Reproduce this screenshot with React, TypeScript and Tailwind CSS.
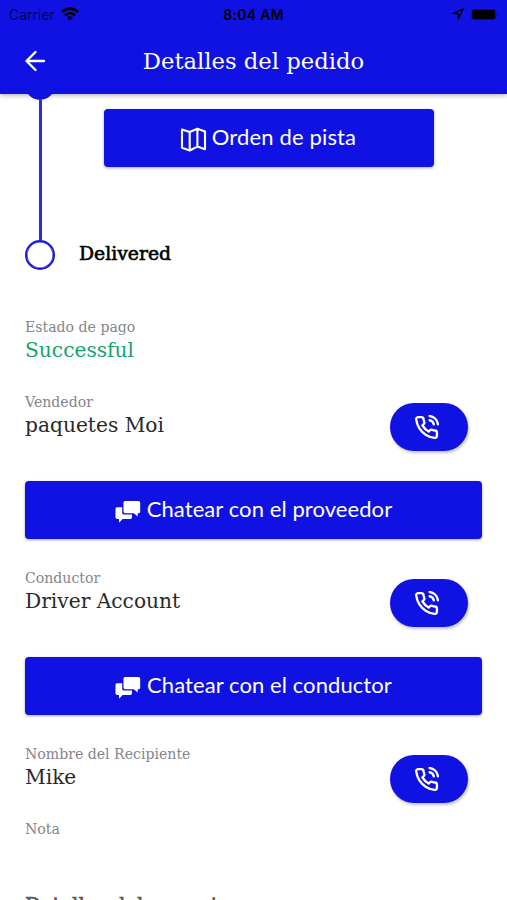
import React from 'react';
import { FiPhoneCall } from 'react-icons/fi';

const serif = "font-['DejaVu_Serif',serif]";

function StatusBar() {
  return (
    <div className="grid h-7 grid-cols-3 items-center px-[9px] font-['Inter',sans-serif] text-black">
      <div className="flex items-center gap-1.5">
        <span className="text-[14px] text-black/70">Carrier</span>
        <svg width="18" height="14" viewBox="0 0 18 14" fill="none" stroke="black" strokeWidth="2.6">
          <path d="M1 5C5.5.5 12.500.5 17 5M4 8.300C6.800 5.500 11.200 5.500 14 8.300" />
          <path d="M9 13.500 6 10.500Q9 8 12 10.500Z" fill="black" stroke="none" />
        </svg>
      </div>
      <span className="text-center text-[14px] font-semibold tracking-[0.3px]">8:04 AM</span>
      <div className="flex items-center justify-end gap-[7px]">
        <svg width="12" height="12" viewBox="0 0 12 12" fill="none" stroke="black" strokeWidth="1.300" strokeLinejoin="round">
          <path d="M11 1 1 5.500h5.300V11Z" />
        </svg>
        <div className="flex items-center gap-px">
          <span className="h-[11px] w-[25px] rounded-[3px] bg-black/30 p-px">
            <span className="block h-full rounded-[2px] bg-black" />
          </span>
          <span className="h-1 w-px rounded-r bg-black/50" />
        </div>
      </div>
    </div>
  );
}

function BackIcon() {
  return (
    <svg className="ml-[25px]" width="21" height="22" viewBox="0 0 21 22" fill="none" stroke="currentColor" strokeWidth="2.3" strokeLinecap="round" strokeLinejoin="round">
      <path d="M19 11H1.500M10.500 2 1.500 11l9 9" />
    </svg>
  );
}

function MapIcon() {
  return (
    <svg width="27" height="26" viewBox="0 0 27 26" fill="none" stroke="currentColor" strokeWidth="2.1" strokeLinejoin="round">
      <path d="M2 2.500 9.700 5 17.400 1.800 25 4.500V22.300L17.400 19.600 9.700 23.500 2 20.800ZM9.700 5V23.500M17.400 1.800V19.600" />
    </svg>
  );
}

function ChatIcon() {
  return (
    <svg width="26" height="24" viewBox="0 0 26 24" fill="currentColor">
      <path d="M10.200 1H23.500Q25.200 1 25.200 2.700V11.500Q25.200 13.200 23.500 13.200H22.700V16.600L18.800 13.200H10.200Q8.500 13.200 8.500 11.500V2.700Q8.500 1 10.200 1Z" />
      <path d="M2 7.300H7.200V12.700Q7.200 14.600 9.100 14.600H17V17.200Q17 18.900 15.300 18.900H7.600L4 22.800V18.900H2.200Q.5 18.900.5 17.200V8.900Q.5 7.300 2 7.300Z" />
    </svg>
  );
}

function CallButton() {
  return (
    <button className="mr-[14.5px] mt-[11px] flex h-12 w-[78px] items-center justify-center rounded-full bg-[#0f12e3] pr-1 text-white shadow-[1px_2px_3px_rgba(0,0,0,0.25)]">
      <FiPhoneCall size={25} strokeWidth={2.3} />
    </button>
  );
}

function ChatButton({ label }: { label: string }) {
  return (
    <button className="flex h-[58px] w-full items-center justify-center gap-1.5 rounded bg-[#0f12e3] font-['Lato',sans-serif] text-[22px] tracking-[0.08px] text-white shadow-[0_1px_3px_rgba(0,0,0,0.35)]">
      <span className="mt-1">
        <ChatIcon />
      </span>
      <span className="-mt-1">{label}</span>
    </button>
  );
}

function Field({ label, value, green }: { label: string; value: string; green?: boolean }) {
  return (
    <div className={serif}>
      <div className="h-[21px] text-[14.1px] leading-[21px] text-[#85858a]">{label}</div>
      <div
        className={
          green
            ? 'text-[20.2px] leading-[24px] text-[#12a46b]'
            : 'text-[20.2px] leading-[24px] text-[#292929]'
        }
      >
        {value}
      </div>
    </div>
  );
}

export default function App() {
  return (
    <div className="flex h-[900px] w-[507px] flex-col overflow-hidden bg-white">
      <header className="h-[94px] shrink-0 bg-[#0f12e3] shadow-[0_1px_5px_rgba(0,0,0,0.35)]">
        <StatusBar />
        <div className="grid h-[66px] grid-cols-[72px_1fr_72px] items-center text-white">
          <BackIcon />
          <h1 className={serif + ' text-center text-[22.7px]'}>Detalles del pedido</h1>
        </div>
      </header>
      <section className="flex h-[176px] shrink-0 pl-[25px]">
        <div className="flex w-[30px] flex-col items-center">
          <div className="flex h-1.5 items-end overflow-hidden">
            <div className="size-[30px] shrink-0 rounded-full bg-[#0f12e3]" />
          </div>
          <div className="w-[3px] grow bg-[#2a2cd8]" />
          <div className="size-[30px] rounded-full border-[2.5px] border-[#1719dc] shadow-[inset_0_0_0_0.5px_#1719dc]" />
        </div>
        <div className="ml-6 flex grow flex-col justify-between">
          <button className="ml-[25px] mt-[15px] flex h-[58px] w-[330px] items-center justify-center gap-[5px] rounded bg-[#0f12e3] pr-0.5 font-['Lato',sans-serif] text-[22px] tracking-[0.15px] text-white shadow-[0_1px_3px_rgba(0,0,0,0.35)]">
            <span className="mt-[3px]">
              <MapIcon />
            </span>
            <span className="-mt-1">Orden de pista</span>
          </button>
          <h2 className={serif + ' h-[32px] text-[18.8px] leading-[32px] text-black [-webkit-text-stroke:0.6px_black]'}>
            Delivered
          </h2>
        </div>
      </section>
      <main className="px-[25px]">
        <div className="mt-[47px] h-[75px]">
          <Field label="Estado de pago" value="Successful" green />
        </div>
        <div className="flex h-[89px] justify-between">
          <Field label="Vendedor" value="paquetes Moi" />
          <CallButton />
        </div>
        <ChatButton label="Chatear con el proveedor" />
        <div className="mt-[29px] flex h-[89px] justify-between">
          <Field label="Conductor" value="Driver Account" />
          <CallButton />
        </div>
        <ChatButton label="Chatear con el conductor" />
        <div className="mt-[29px] flex h-[75px] justify-between">
          <Field label="Nombre del Recipiente" value="Mike" />
          <CallButton />
        </div>
        <Field label="Nota" value="" />
        <h2 className={serif + ' mt-[53px] whitespace-nowrap text-[19.7px] leading-[26px] text-[#55555a] [-webkit-text-stroke:0.6px_#55555a]'}>
          Detalles del paquete
        </h2>
      </main>
    </div>
  );
}
